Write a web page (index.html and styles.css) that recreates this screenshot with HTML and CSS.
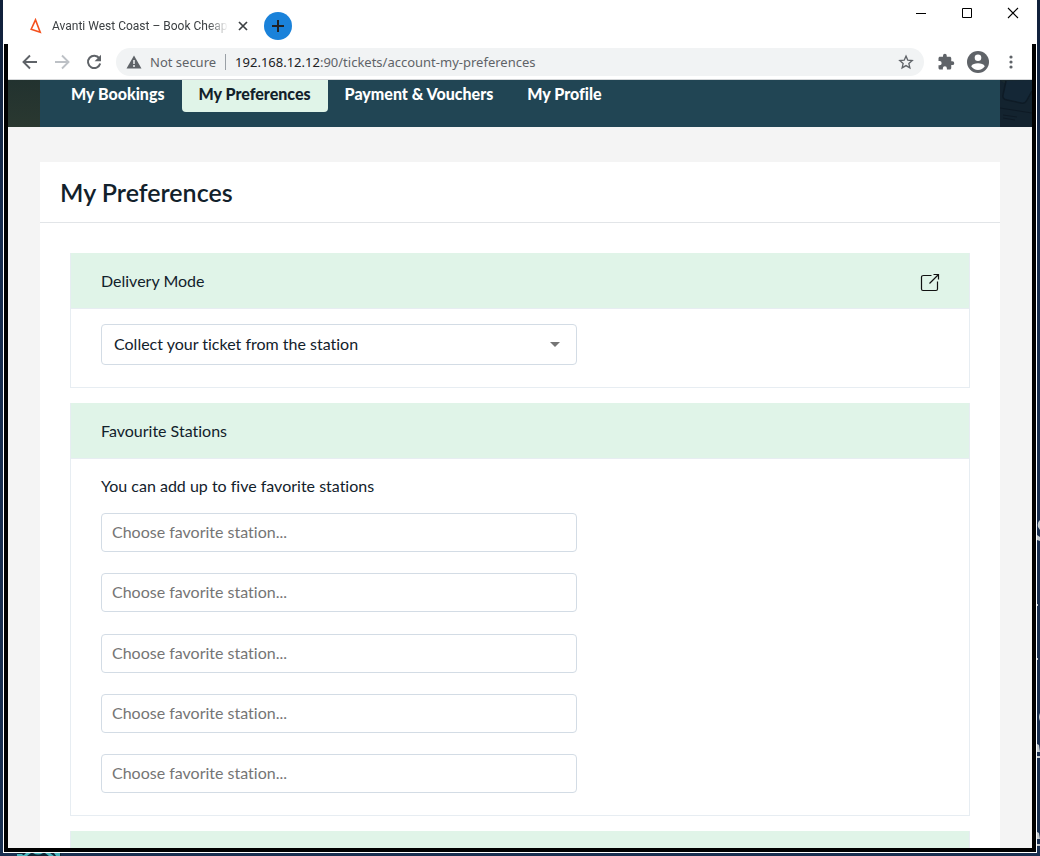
FILE: index.html
```html
<!DOCTYPE html>
<html lang="en">
<head>
<meta charset="utf-8">
<title>Avanti West Coast – Book Cheap</title>
<link rel="stylesheet" href="styles.css">
</head>
<body>
<div class="desktop">
  <div class="window">
    <header class="titlebar">
      <div class="browser-tab">
        <svg class="favicon" width="12" height="16" viewBox="0 0 12 16"><path d="M5.500 1.800 L10.200 14.200 L1.200 11.200 Z" fill="none" stroke="#f4511e" stroke-width="1.600"/></svg>
        <span class="tab-title">Avanti West Coast – Book Cheap</span>
        <button class="icon-button tab-close" aria-label="Close tab"><svg width="10" height="10" viewBox="0 0 10 10"><path d="M1 1l8 8M9 1l-8 8" stroke="#3c4043" stroke-width="1.700"/></svg></button>
      </div>
      <button class="icon-button new-tab" aria-label="New tab"><svg width="14" height="14" viewBox="0 0 14 14"><path d="M7 1v12M1 7h12" stroke="#202124" stroke-width="2"/></svg></button>
      <div class="window-controls">
        <button class="icon-button" aria-label="Minimise"><svg width="12" height="12" viewBox="0 0 12 12"><path d="M1 6.500h10" stroke="#000"/></svg></button>
        <button class="icon-button" aria-label="Maximise"><svg width="12" height="12" viewBox="0 0 12 12"><path d="M1.500 1.500h9v9h-9z" fill="none" stroke="#000"/></svg></button>
        <button class="icon-button" aria-label="Close"><svg width="12" height="12" viewBox="0 0 12 12"><path d="M1 1l10 10M11 1L1 11" stroke="#000" stroke-width="1.100"/></svg></button>
      </div>
    </header>
    <div class="frame">
      <div class="toolbar">
        <div class="history">
          <button class="icon-button" aria-label="Back"><svg width="16" height="16" viewBox="0 0 16 16"><path d="M15 8H2M8 1.500L1.500 8L8 14.500" fill="none" stroke="#5f6368" stroke-width="1.900"/></svg></button>
          <button class="icon-button" aria-label="Forward"><svg width="16" height="16" viewBox="0 0 16 16"><path d="M1 8h13M8 1.500L14.500 8L8 14.500" fill="none" stroke="#bdc1c6" stroke-width="1.900"/></svg></button>
          <button class="icon-button" aria-label="Reload"><svg width="16" height="16" viewBox="0 0 16 16"><path d="M13.300 4.300A6.200 6.200 0 1 0 14.200 9.500" fill="none" stroke="#5f6368" stroke-width="2"/><path d="M15 .8v6.400H8.600z" fill="#5f6368"/></svg></button>
        </div>
        <div class="omnibox">
          <svg width="16" height="14" viewBox="0 0 16 14"><path d="M8 .5L15.500 13.500H.5z" fill="#5f6368"/><path d="M8 5v4M8 10v2" stroke="#f1f3f4" stroke-width="1.500"/></svg>
          <span class="security">Not secure</span>
          <span class="url"><span class="host">192.168.12.12</span>:90/tickets/account-my-preferences</span>
          <button class="icon-button" aria-label="Bookmark"><svg width="16" height="16" viewBox="0 0 24 24"><path d="M12 3.200l2.700 6.100 6.600.6-5 4.400 1.500 6.500L12 17.400l-5.800 3.400 1.500-6.500-5-4.400 6.600-.6z" fill="none" stroke="#5f6368" stroke-width="2"/></svg></button>
        </div>
        <div class="actions">
          <button class="icon-button" aria-label="Extensions"><svg width="18" height="18" viewBox="0 0 24 24"><path d="M20.500 11H19V7c0-1.100-.9-2-2-2h-4V3.500a2.500 2.500 0 0 0-5 0V5H4c-1.100 0-2 .9-2 2v3.800h1.500a2.700 2.700 0 0 1 0 5.400H2V20c0 1.100.9 2 2 2h3.800v-1.500a2.700 2.700 0 0 1 5.400 0V22H17c1.100 0 2-.9 2-2v-4h1.500a2.500 2.500 0 0 0 0-5z" fill="#5f6368"/></svg></button>
          <button class="icon-button" aria-label="Profile"><svg width="22" height="22" viewBox="0 0 22 22"><circle cx="11" cy="11" r="11" fill="#5f6368"/><circle cx="11" cy="6.700" r="3.300" fill="#fff"/><path d="M4.200 15.300C5.300 13 8 12.300 11 12.300s5.700.7 6.800 3C16.300 17.800 13.800 18.900 11 18.900s-5.300-1.100-6.800-3.600z" fill="#fff"/></svg></button>
          <button class="icon-button" aria-label="Menu"><svg width="4" height="14" viewBox="0 0 4 14"><g fill="#5f6368"><circle cx="2" cy="2" r="1.600"/><circle cx="2" cy="7" r="1.600"/><circle cx="2" cy="12" r="1.600"/></g></svg></button>
        </div>
      </div>
      <main class="page">
        <div class="hero">
          <nav class="account-nav">
            <a href="#bookings">My Bookings</a>
            <a href="#preferences" class="active" aria-current="page">My Preferences</a>
            <a href="#payment">Payment &amp; Vouchers</a>
            <a href="#profile">My Profile</a>
          </nav>
          <svg class="seats" width="32" height="47" viewBox="0 0 32 47"><path d="M0 0h32v47H0z" fill="#13232f"/><path d="M0 0h32v8L4 3z" fill="#19292f"/><path d="M6 1L3 15q-1 4 4 5l14 3q4 1 6-3l5-9V0z" fill="#142736"/><path d="M6 1L3 15q-1 4 4 5l14 3q4 1 6-3l5-9" fill="none" stroke="#0e1b26" stroke-width="1.500"/><path d="M0 28l32 5M3 35l14 2M3 38l12 2" stroke="#0e1a25" fill="none"/></svg>
        </div>
        <section class="panel">
          <h1>My Preferences</h1>
          <div class="panel-body">
            <section class="group">
              <div class="group-head">
                <h2><label for="delivery">Delivery Mode</label></h2>
                <button class="icon-button" aria-label="Open delivery mode"><svg width="20" height="24" viewBox="-1 -4 20 24"><path d="M10.500 2.500H2.500Q.5 2.500.5 4v12q0 1.500 1.500 1.500h13q1.500 0 1.500-1.500V8.500M8.500 10.500L17.500 1.500M12.500 1.500h5V6.500" fill="none" stroke="#111" stroke-width="1.200"/></svg></button>
              </div>
              <div class="group-body">
                <div class="select">
                  <select id="delivery"><option>Collect your ticket from the station</option></select>
                </div>
              </div>
            </section>
            <section class="group">
              <div class="group-head"><h2>Favourite Stations</h2></div>
              <div class="group-body">
                <p>You can add up to five favorite stations</p>
                <div class="stations">
                  <input type="text" aria-label="Favorite station 1" placeholder="Choose favorite station...">
                  <input type="text" aria-label="Favorite station 2" placeholder="Choose favorite station...">
                  <input type="text" aria-label="Favorite station 3" placeholder="Choose favorite station...">
                  <input type="text" aria-label="Favorite station 4" placeholder="Choose favorite station...">
                  <input type="text" aria-label="Favorite station 5" placeholder="Choose favorite station...">
                </div>
              </div>
            </section>
            <section class="group"><div class="group-head"></div></section>
          </div>
        </section>
      </main>
    </div>
  </div>
  <svg class="wallpaper-right" width="3" height="346" viewBox="0 0 3 346"><g fill="#c5cbd0"><path d="M3 0Q0 2 1 7l2 3zM0 15l3 2v4l-3-1zM0 84h1v2H0zM0 138h1v2H0zM3 193q-2 4 0 8zM0 224l2 1 1 7H0zM0 236h3v2H0zM0 312l2 1 1 6H0zM0 324h3v2H0z"/></g></svg>
  <svg class="wallpaper-bottom" width="44" height="3" viewBox="0 0 44 3"><path d="M0 0h44v3H0z" fill="#0d2535"/><path d="M0 1h5l2 2H0zM9 0h5l-4 3H6zM16 0h10q-5 3-10 0zM28 0h5l4 3h-5zM37 0h6v3h-4z" fill="#4ab5bd"/></svg>
</div>
</body>
</html>
```
FILE: styles.css
```css
* { box-sizing: border-box; }
body {
  margin: 0;
  font-family: Lato, "Open Sans", sans-serif;
  font-size: 16px;
  line-height: 24px;
  font-variant-ligatures: none;
  color: #12212b;
}
h1, h2, p { margin: 0; }
.icon-button {
  display: inline-flex;
  align-items: center;
  justify-content: center;
  padding: 0;
  border: 0;
  background: none;
}
.icon-button svg, .omnibox svg { display: block; flex: none; }

.desktop {
  position: relative;
  height: 100vh;
  padding: 0 3px 3px;
  background: linear-gradient(#10203a, #172c4e 25%, #192f50);
}
.wallpaper-right { position: absolute; right: 0; top: 520px; }
.wallpaper-bottom { position: absolute; left: 17px; bottom: 0; }
.window {
  display: flex;
  flex-direction: column;
  height: 100%;
  padding: 0 1px 1px;
  background: #fff;
}

.titlebar {
  display: flex;
  align-items: center;
  height: 44px;
  padding: 8px 0 0 26px;
  font-family: Roboto, "Open Sans", sans-serif;
  font-size: 12px;
  color: #3c4043;
}
.browser-tab { display: flex; align-items: center; width: 216px; }
.favicon { flex: none; margin-right: 10px; }
.tab-title {
  flex: 1;
  white-space: nowrap;
  mask-image: linear-gradient(to left, transparent, #000 20px);
}
.tab-close { width: 12px; margin-left: 10px; }
.new-tab {
  width: 28px;
  height: 28px;
  margin-left: 18px;
  border-radius: 50%;
  background: #1a82da;
}
.window-controls {
  display: flex;
  align-self: flex-start;
  height: 10px;
  align-items: center;
  margin-left: auto;
}
.window-controls .icon-button { width: 46px; }

.frame {
  flex: 1;
  display: flex;
  flex-direction: column;
  min-height: 0;
  border: solid #000;
  border-width: 0 4px 4px;
}
.toolbar {
  display: flex;
  align-items: center;
  flex: none;
  height: 36px;
  border-bottom: 1px solid #d5d7d9;
  font-family: "Noto Sans", "Open Sans", sans-serif;
  font-size: 13px;
  color: #5f6368;
}
.history { display: flex; gap: 16px; padding: 0 14px; }
.omnibox {
  display: flex;
  align-items: center;
  flex: 1;
  height: 28px;
  padding: 0 10px;
  border-radius: 14px;
  background: #f1f3f4;
  white-space: nowrap;
}
.security {
  margin: 0 9px 0 8px;
  padding-right: 9px;
  border-right: 1px solid #9aa0a6;
  line-height: 16px;
}
.url { flex: 1; }
.host { color: #202124; }
.actions { display: flex; align-items: center; gap: 12px; padding: 0 19px 0 13px; }
.actions .icon-button:last-child { margin-left: 8px; }

.page {
  flex: 1;
  min-height: 0;
  overflow: hidden;
  background: #f4f4f4;
}
.hero {
  display: flex;
  padding-left: 32px;
  background: linear-gradient(#22322f, #2a3830);
}
.seats { flex: none; display: block; }
.account-nav {
  flex: 1;
  display: flex;
  align-items: flex-start;
  padding-left: 14px;
  background: #214554;
}
.account-nav a {
  height: 32px;
  padding: 2px 17px;
  border-radius: 0 0 4px 4px;
  font-weight: 900;
  color: #fff;
  text-decoration: none;
  white-space: nowrap;
}
.account-nav .active { background: #e0f4e8; color: #12212b; }

.panel { margin: 35px 32px 0; background: #fff; }
.panel h1 {
  padding: 15px 20px;
  border-bottom: 1px solid #e2e5e8;
  font-size: 25px;
  line-height: 30px;
  font-weight: 600;
}
.panel-body {
  display: flex;
  flex-direction: column;
  gap: 15px;
  padding: 30px;
}
.group { border: 1px solid #e7edf2; border-top: 0; }
.group-head {
  display: flex;
  align-items: center;
  justify-content: space-between;
  min-height: 56px;
  padding: 0 29px 0 30px;
  border-bottom: 1px solid #e7edf2;
  background: #e0f4e8;
}
.group-head h2 { font-size: 16px; font-weight: 400; }
.group-body { padding: 15px 30px 22px; }
.select { position: relative; max-width: 476px; }
.select::after {
  content: "";
  position: absolute;
  right: 17px;
  top: 18px;
  border: 5px solid transparent;
  border-top-color: #757575;
  border-bottom: 0;
  pointer-events: none;
}
select, input {
  display: block;
  width: 100%;
  border: 1px solid #d3dce5;
  border-radius: 4px;
  background: #fff;
  font: inherit;
  color: inherit;
}
select { height: 41px; padding: 0 12px 2px; appearance: none; }
input { height: 39px; padding: 0 10px 2px; }
input::placeholder { color: #757575; opacity: 1; }
.stations {
  display: grid;
  align-content: space-between;
  max-width: 476px;
  min-height: 280px;
  margin-top: 15px;
}
```
